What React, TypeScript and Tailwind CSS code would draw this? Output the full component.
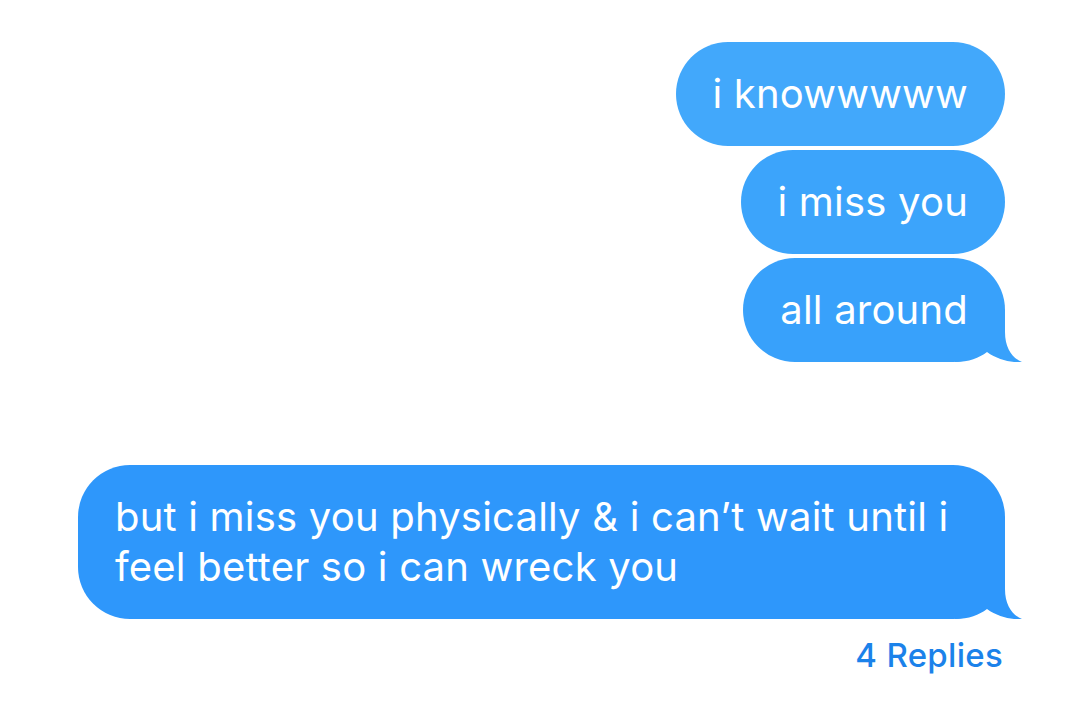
const font = { fontFamily: "Inter, 'Noto Sans', Roboto, sans-serif" };

function Tail({ color }: { color: string }) {
  return (
    <svg
      className="absolute right-[-20px] bottom-0 w-[70px] h-[52px]"
      viewBox="0 0 70 52"
    >
      <path
        d="M50 0 L50 22 C50 38 57 48 67 52 C57 53 43 50 32 42 C24 48 14 52 0 52 L0 0 Z"
        fill={color}
      />
    </svg>
  );
}

function Bubble({
  text,
  color,
  tail,
}: {
  text: string;
  color: string;
  tail?: boolean;
}) {
  return (
    <div
      className="relative rounded-[52px] px-[37px] py-[27px] text-white text-[40px] leading-[50px] tracking-[0.2px]"
      style={{ backgroundColor: color }}
    >
      {tail && <Tail color={color} />}
      <span className="relative">{text}</span>
    </div>
  );
}

export default function App() {
  return (
    <div className="w-[1066px] h-[711px] bg-white overflow-hidden" style={font}>
      <div className="flex flex-col items-end pr-[61px] pt-[42px] gap-[4px]">
        <Bubble text="i knowwwww" color="#42a8fb" />
        <Bubble text="i miss you" color="#3ca4fb" />
        <Bubble text="all around" color="#38a1fb" tail />
      </div>
      <div className="flex flex-col items-end pr-[61px] mt-[103px]">
        <div className="w-[927px]">
          <Bubble
            text="but i miss you physically & i can’t wait until i feel better so i can wreck you"
            color="#2e97fb"
            tail
          />
        </div>
        <div className="mt-[17px] mr-[2px] text-[33px] leading-[38px] font-medium tracking-[0.3px] text-[#1b82ea]">
          4 Replies
        </div>
      </div>
    </div>
  );
}
